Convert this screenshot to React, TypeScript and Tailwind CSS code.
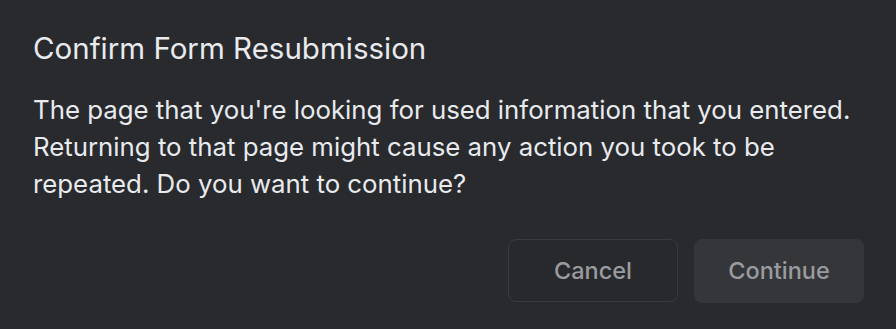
import React from 'react';

export default function App() {
  return (
    <div
      className="w-[896px] h-[329px] bg-[#292a2d] flex flex-col pl-[33px] pr-[32px] pt-[30px]"
      style={{ fontFamily: 'Inter, "Liberation Sans", sans-serif' }}
    >
      <h1 className="text-[29.5px] leading-[36px] text-[#e8eaed] font-normal">Confirm Form Resubmission</h1>
      <p className="mt-[25px] text-[25.8px] leading-[37px] text-[#e8eaed]">
        The page that you're looking for used information that you entered. Returning to that page might cause any
        action you took to be repeated. Do you want to continue?
      </p>
      <div className="mt-auto mb-[26px] flex justify-end gap-[16px]">
        <button className="w-[170px] h-[63px] rounded-[8px] border border-[#3a3b3e] bg-[#28292c] text-[23.5px] font-medium text-[#9a9b9e]">
          Cancel
        </button>
        <button className="w-[170px] h-[64px] rounded-[8px] bg-[#35363a] text-[23.5px] font-medium text-[#9a9b9e]">
          Continue
        </button>
      </div>
    </div>
  );
}
